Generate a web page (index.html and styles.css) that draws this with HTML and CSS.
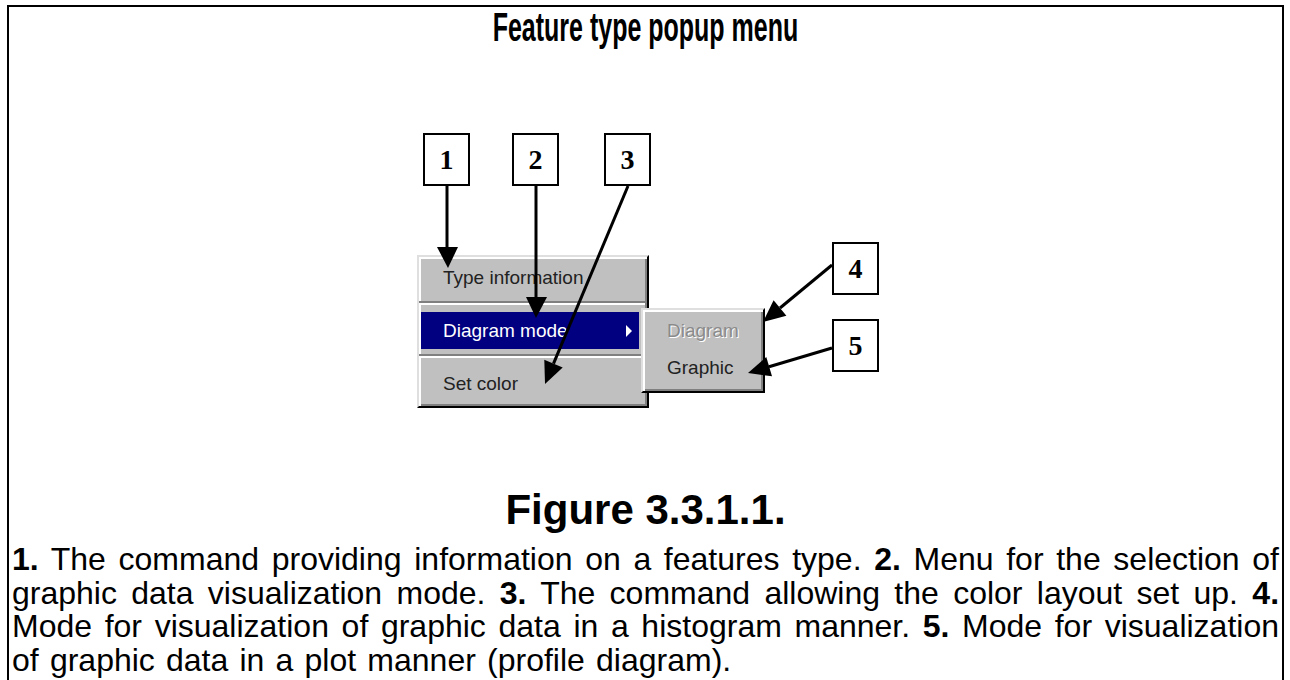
FILE: index.html
```html
<!DOCTYPE html>
<html lang="en">
<head>
    <meta charset="UTF-8">
    <meta name="viewport" content="width=device-width, initial-scale=1.0">
    <title>Feature type popup menu</title>
    <link rel="stylesheet" href="styles.css">
</head>

<body>
    <div class="page">
        <h1 class="title"><span>Feature type popup menu</span></h1>

        <!-- the figure: a popup menu with numbered callouts -->
        <div class="figure">
            <div class="callout c1">1</div>
            <div class="callout c2">2</div>
            <div class="callout c3">3</div>
            <div class="callout c4">4</div>
            <div class="callout c5">5</div>

            <div class="menu main-menu">
                <div class="item">Type information</div>
                <div class="sep"></div>
                <div class="item active">Diagram mode<span class="submark"></span></div>
                <div class="sep"></div>
                <div class="item">Set color</div>
            </div>

            <div class="menu sub-menu">
                <div class="item disabled">Diagram</div>
                <div class="item">Graphic</div>
            </div>

            <svg class="arrows" viewBox="9 47 1273 440" width="1273" height="440">
                <g stroke="#000" stroke-width="3" fill="none">
                    <line x1="447" y1="186" x2="447" y2="250"/>
                    <line x1="536" y1="186" x2="536" y2="300"/>
                    <line x1="628" y1="186" x2="553.5" y2="363.7"/>
                    <line x1="832" y1="265" x2="780" y2="308"/>
                    <line x1="832" y1="348" x2="769" y2="366.7"/>
                </g>
                <g fill="#000">
                    <polygon points="437,247 458,247 448,268"/>
                    <polygon points="526,297 547,297 536,318"/>
                    <polygon points="562.7,367.6 544.3,359.8 545,384"/>
                    <polygon points="786.4,315.7 773.6,300.3 763,322"/>
                    <polygon points="772,376.3 766.3,357.1 748,373"/>
                </g>
            </svg>
        </div>

        <h2 class="caption">Figure 3.3.1.1.</h2>
        <p class="legend"><b>1.</b> The command providing information on a features type. <b>2.</b> Menu for the selection of graphic data visualization mode. <b>3.</b> The command allowing the color layout set up. <b>4.</b> Mode for visualization of graphic data in a histogram manner. <b>5.</b> Mode for visualization of graphic data in a plot manner (profile diagram).</p>
    </div>
</body>

</html>
```

FILE: styles.css
```css
body {
    margin: 0;
    background: #fff;
    color: #000;
    font-family: "Liberation Sans", Arial, sans-serif;
}

.page {
    margin: 5px 0 0 7px;
    width: 1277px;
    min-height: 700px;
    box-sizing: border-box;
    border: 2px solid #000;
    border-bottom: 0;
}

.title {
    margin: 0;
    text-align: center;
    font-size: 40px;
    line-height: 40px;
    font-weight: bold;
}

.title span {
    display: inline-block;
    transform: scaleX(0.625);
}

.figure {
    position: relative;
    height: 440px;
}

/* numbered boxes */
.callout {
    position: absolute;
    width: 47px;
    height: 53px;
    box-sizing: border-box;
    border: 2px solid #000;
    background: #fff;
    display: flex;
    align-items: center;
    justify-content: center;
    font-family: "Liberation Serif", "Times New Roman", serif;
    font-size: 28px;
    font-weight: bold;
}

.c1 { left: 414px; top: 86px; }
.c2 { left: 503px; top: 86px; }
.c3 { left: 595px; top: 86px; }
.c4 { left: 823px; top: 195px; }
.c5 { left: 823px; top: 272px; }

/* win95 style popup */
.menu {
    position: absolute;
    box-sizing: border-box;
    background: #c0c0c0;
    border: 2px solid;
    border-color: #dfdfdf #000 #000 #dfdfdf;
    box-shadow: inset 2px 2px #fff, inset -2px -2px #808080;
    display: flex;
    flex-direction: column;
    font-size: 19px;
    color: #222;
}

.main-menu {
    left: 408px;
    top: 208px;
    width: 232px;
    padding: 2px 8px 4px 2px;
}

.sub-menu {
    left: 632px;
    top: 261px;
    width: 124px;
    padding: 2px 2px 5px 2px;
}

.item {
    display: flex;
    align-items: center;
    height: 37px;
    padding-left: 22px;
    white-space: nowrap;
}

.item.active {
    background: #000080;
    color: #fff;
}

.item.disabled {
    color: #8a8a8a;
    text-shadow: 1px 1px #fff;
}

.submark {
    margin-left: auto;
    margin-right: 7px;
    border-left: 6px solid #fff;
    border-top: 6px solid transparent;
    border-bottom: 6px solid transparent;
}

.sep {
    height: 0;
    margin: 5px -6px 7px -2px;
    border-top: 2px solid #808080;
    border-bottom: 2px solid #fff;
}

.arrows {
    position: absolute;
    left: 0;
    top: 0;
    pointer-events: none;
}

.caption {
    margin: 0;
    text-align: center;
    font-size: 42px;
    line-height: 46px;
    font-weight: bold;
}

.legend {
    margin: 10px 0 0;
    padding: 0 3px;
    font-size: 32px;
    line-height: 33.6px;
    word-spacing: 2.3px;
    text-align: justify;
}
```
